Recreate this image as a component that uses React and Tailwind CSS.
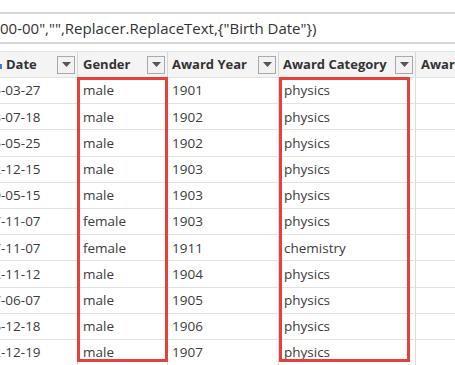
import React from "react";

const rows = [
  ["1845", "male", "1901", "physics"],
  ["1853", "male", "1902", "physics"],
  ["1865", "male", "1902", "physics"],
  ["1852", "male", "1903", "physics"],
  ["1859", "male", "1903", "physics"],
  ["1867", "female", "1903", "physics"],
  ["1867", "female", "1911", "chemistry"],
  ["1842", "male", "1904", "physics"],
  ["1837", "male", "1905", "physics"],
  ["1856", "male", "1906", "physics"],
  ["1852", "male", "1907", "physics"],
];
const md = ["-03-27", "-07-18", "-05-25", "-12-15", "-05-15", "-11-07", "-11-07", "-11-12", "-06-07", "-12-18", "-12-19"];

function Drop() {
  return (
    <div className="w-[18px] h-[18px] border border-[#a9a9a9] bg-[#f2f2f2] flex items-center justify-center shrink-0">
      <svg width="9" height="5" viewBox="0 0 9 5">
        <path d="M0 0 L9 0 L4.5 5 Z" fill="#555" />
      </svg>
    </div>
  );
}

export default function App() {
  return (
    <div
      className="relative w-[455px] h-[365px] overflow-hidden bg-white text-[#3c3c3c]"
      style={{ fontFamily: '"Open Sans", "Noto Sans", sans-serif' }}
    >
      <div className="h-[12px]" />
      <div className="h-[32px] border-t-2 border-b-2 border-[#d6d6d6] flex items-center text-[15px] text-[#333] whitespace-nowrap leading-none">
        00-00","",Replacer.ReplaceText,{"{"}"Birth Date"{"}"})
      </div>
      <div className="h-[7px]" />
      <div className="h-[26px] bg-[#f4f4f4] border-t border-[#e6e6e6] flex items-center text-[13px] font-bold text-[#333] whitespace-nowrap">
        <div className="w-[78px] h-full flex items-center border-r border-[#d8d8d8] pr-[2px] shrink-0">
          <div className="w-[2px] h-[5px] bg-[#3c7fd0] mt-[3px]" />
          <span className="ml-[4px] flex-1">Date</span>
          <Drop />
        </div>
        <div className="w-[90px] h-full flex items-center border-r border-[#d8d8d8] pl-[5px] pr-[2px] shrink-0">
          <span className="flex-1">Gender</span>
          <Drop />
        </div>
        <div className="w-[111px] h-full flex items-center border-r border-[#d8d8d8] pl-[4px] pr-[2px] shrink-0">
          <span className="flex-1">Award Year</span>
          <Drop />
        </div>
        <div className="w-[137px] h-full flex items-center border-r border-[#d8d8d8] pl-[4px] pr-[2px] shrink-0">
          <span className="flex-1">Award Category</span>
          <Drop />
        </div>
        <div className="flex-1 h-full flex items-center pl-[5px] overflow-hidden">Award</div>
      </div>
      {rows.map((r, i) => (
        <div key={i} className="h-[26.2px] flex items-center text-[13.5px] whitespace-nowrap border-t border-[#e2e2e2]">
          <div className="w-[78px] h-full flex items-center border-r border-[#dcdcdc] overflow-hidden shrink-0">
            <span className="inline-block w-[40px] text-right -ml-[39px]">{r[0]}</span>
            <span>{md[i]}</span>
          </div>
          <div className="w-[90px] h-full flex items-center border-r border-[#dcdcdc] pl-[5px] shrink-0">{r[1]}</div>
          <div className="w-[111px] h-full flex items-center border-r border-[#dcdcdc] pl-[4px] shrink-0">{r[2]}</div>
          <div className="w-[137px] h-full flex items-center border-r border-[#dcdcdc] pl-[5px] shrink-0">{r[3]}</div>
          <div className="flex-1 h-full" />
        </div>
      ))}
      <div className="absolute left-[77px] top-[77px] w-[91px] h-[285px] border-[3px] border-[#e5413a]" />
      <div className="absolute left-[279px] top-[77px] w-[131px] h-[285px] border-[3px] border-[#e5413a]" />
    </div>
  );
}
